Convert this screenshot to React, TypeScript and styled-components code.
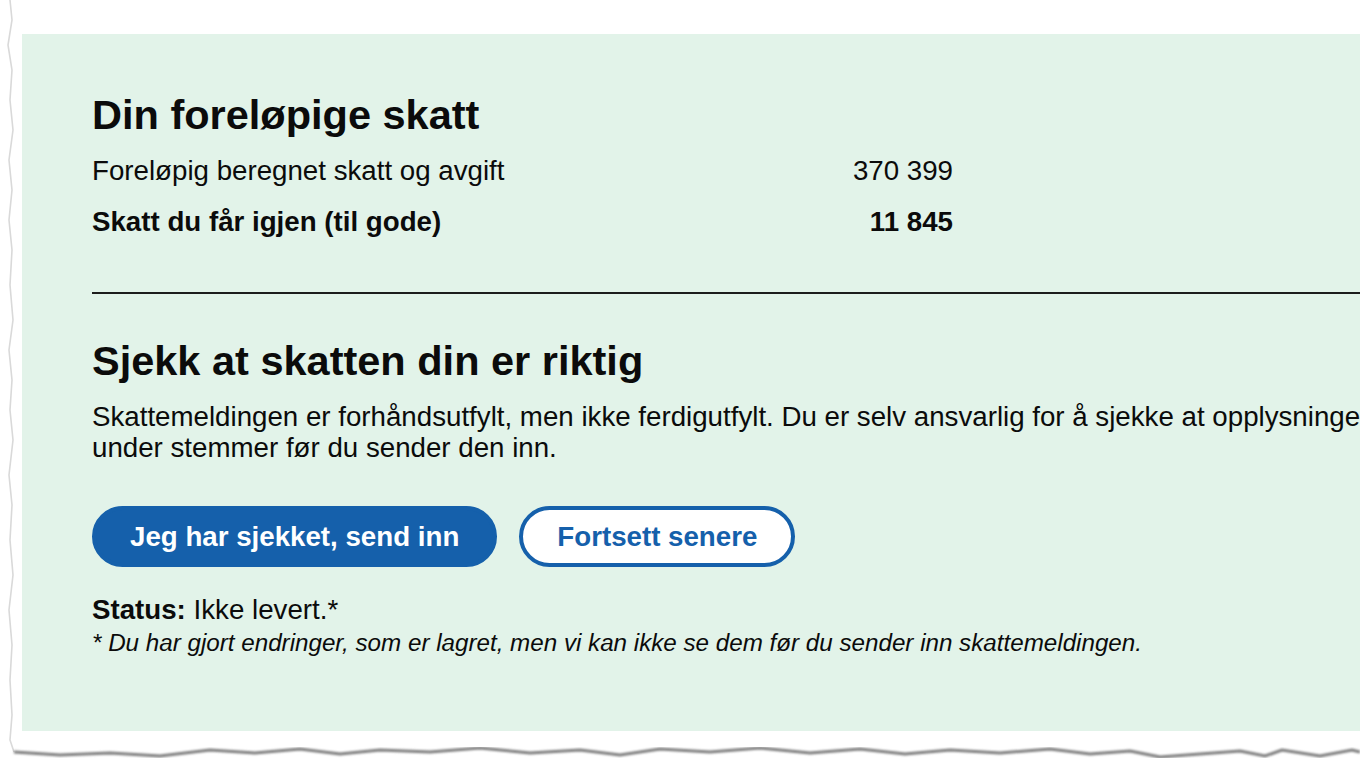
import React from 'react'
import styled, { createGlobalStyle } from 'styled-components'

const GlobalStyle = createGlobalStyle`
  html, body {
    margin: 0;
    padding: 0;
    background: #ffffff;
  }
  body {
    font-family: 'Liberation Sans', Arial, sans-serif;
    color: #0b0b0b;
  }
`

const StyledPaper = styled.div`
  position: relative;
  width: 1360px;
  height: 765px;
  overflow: hidden;
  background: #ffffff;
  padding: 34px 0 0 22px;
  box-sizing: border-box;
`

const StyledPanel = styled.section`
  width: 1420px;
  height: 697px;
  box-sizing: border-box;
  background: #e2f3e9;
  padding: 57px 0 0 70px;
`

const StyledHeading = styled.h2`
  margin: 0 0 12px;
  font-size: 41.5px;
  line-height: 48px;
  font-weight: 700;
`

const StyledSummary = styled.div`
  width: 861px;
  display: grid;
  grid-template-columns: 1fr auto;
  row-gap: 11px;
  font-size: 27.7px;
  line-height: 40px;
`

const StyledCell = styled.span<{ $bold?: boolean; $num?: boolean }>`
  font-weight: ${({ $bold }) => ($bold ? 700 : 400)};
  text-align: ${({ $num }) => ($num ? 'right' : 'left')};
`

const StyledDivider = styled.hr`
  margin: 50px 0 43px;
  border: none;
  border-top: 2px solid #1c1c1c;
`

const StyledLead = styled.p`
  margin: 16px 0 0;
  font-size: 27.7px;
  line-height: 31px;
  white-space: nowrap;
`

const StyledActions = styled.div`
  display: flex;
  gap: 22px;
  margin-top: 43px;
`

const StyledButton = styled.button<{ $variant: 'primary' | 'secondary' }>`
  height: 61px;
  box-sizing: border-box;
  padding: 0 34px;
  border-radius: 31px;
  font-family: 'Liberation Sans', Arial, sans-serif;
  font-size: 27.7px;
  font-weight: 700;
  cursor: pointer;
  border: 4px solid #1560ab;
  background: ${({ $variant }) => ($variant === 'primary' ? '#1560ab' : '#ffffff')};
  color: ${({ $variant }) => ($variant === 'primary' ? '#ffffff' : '#1560ab')};
`

const StyledStatus = styled.p`
  margin: 27px 0 0;
  font-size: 27.7px;
  line-height: 32px;

  strong {
    font-weight: 700;
  }
`

const StyledNote = styled.p`
  margin: 0;
  font-size: 24.2px;
  line-height: 34px;
  font-style: italic;
`

const StyledTornEdge = styled.svg`
  position: absolute;
  inset: 0;
  pointer-events: none;
`

function TornEdge() {
  return (
    <StyledTornEdge width="1360" height="765" viewBox="0 0 1360 765">
      <defs>
        <filter id="blur" x="-5%" y="-5%" width="110%" height="110%">
          <feGaussianBlur stdDeviation="0.8" />
        </filter>
      </defs>
      <path
        d="M10 0 L12 20 L8 45 L12 70 L10 100 L13 130 L9 160 L12 190 L9 220 L12 250 L10 285 L13 320 L9 350 L12 380 L10 410 L13 440 L9 475 L12 505 L10 540 L13 575 L9 610 L12 645 L10 680 L12 715 L10 740 L14 752"
        fill="none"
        stroke="#d9d9d9"
        strokeWidth="1.6"
      />
      <path
        d="M14 752 L60 755 L110 753 L160 756 L210 750 L255 753 L300 749 L340 754 L380 750 L430 752 L480 748 L530 753 L580 750 L620 755 L660 749 L710 752 L760 748 L810 753 L860 749 L905 754 L950 750 L1000 753 L1050 749 L1090 754 L1130 751 L1160 757 L1200 754 L1240 751 L1265 756 L1282 750 L1320 756 L1352 750 L1360 752"
        fill="none"
        stroke="#7d7d7d"
        strokeWidth="3"
        filter="url(#blur)"
      />
    </StyledTornEdge>
  )
}

export default function App() {
  return (
    <>
      <GlobalStyle />
      <StyledPaper>
        <StyledPanel>
          <StyledHeading>Din foreløpige skatt</StyledHeading>
          <StyledSummary>
            <StyledCell>Foreløpig beregnet skatt og avgift</StyledCell>
            <StyledCell $num>370 399</StyledCell>
            <StyledCell $bold>Skatt du får igjen (til gode)</StyledCell>
            <StyledCell $bold $num>
              11 845
            </StyledCell>
          </StyledSummary>
          <StyledDivider />
          <StyledHeading>Sjekk at skatten din er riktig</StyledHeading>
          <StyledLead>
            Skattemeldingen er forhåndsutfylt, men ikke ferdigutfylt. Du er selv ansvarlig for å sjekke at opplysningene
            <br />
            under stemmer før du sender den inn.
          </StyledLead>
          <StyledActions>
            <StyledButton $variant="primary">Jeg har sjekket, send inn</StyledButton>
            <StyledButton $variant="secondary">Fortsett senere</StyledButton>
          </StyledActions>
          <StyledStatus>
            <strong>Status:</strong> Ikke levert.*
          </StyledStatus>
          <StyledNote>
            * Du har gjort endringer, som er lagret, men vi kan ikke se dem før du sender inn skattemeldingen.
          </StyledNote>
        </StyledPanel>
        <TornEdge />
      </StyledPaper>
    </>
  )
}
